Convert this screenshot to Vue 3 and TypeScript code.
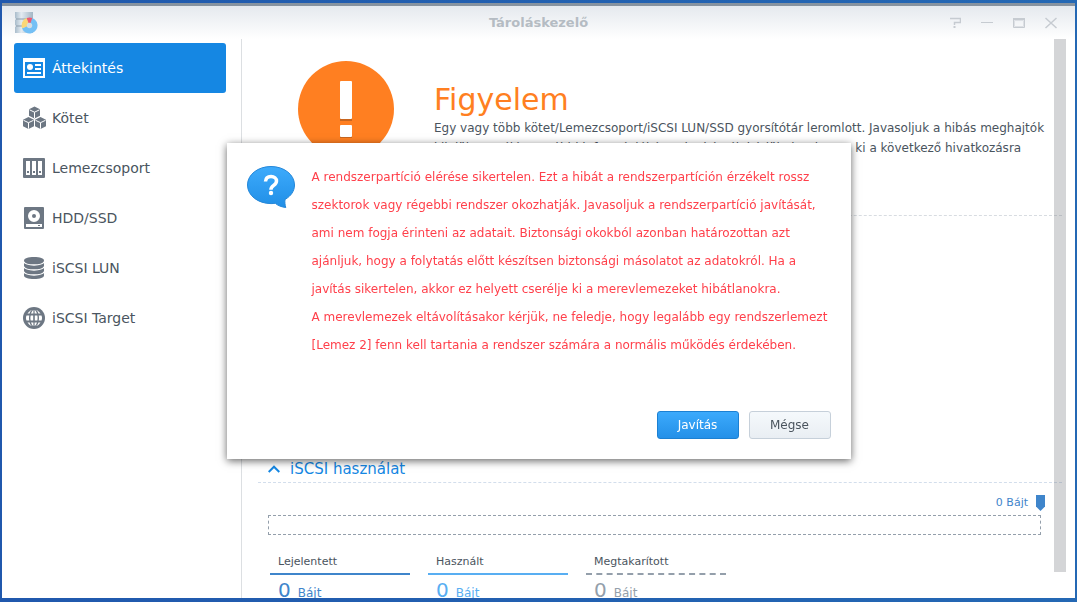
<script setup lang="ts">
import { ref } from 'vue'

interface NavItem { id: string; label: string }
interface Stat { id: string; label: string; value: number }

const active = ref('overview')
const dialogOpen = ref(true)
const usageOpen = ref(true)

const items: NavItem[] = [
  { id: 'overview', label: 'Áttekintés' },
  { id: 'volume', label: 'Kötet' },
  { id: 'group', label: 'Lemezcsoport' },
  { id: 'disk', label: 'HDD/SSD' },
  { id: 'lun', label: 'iSCSI LUN' },
  { id: 'target', label: 'iSCSI Target' },
]

const stats: Stat[] = [
  { id: 'reported', label: 'Lejelentett', value: 0 },
  { id: 'used', label: 'Használt', value: 0 },
  { id: 'saved', label: 'Megtakarított', value: 0 },
]
</script>

<template>
  <div class="desktop">
    <section class="window">
      <header class="titlebar">
        <svg class="app-icon" width="24" height="22" viewBox="0 0 24 22" aria-hidden="true">
          <defs>
            <linearGradient id="metal" x1="0" x2="1" y1="0" y2="0">
              <stop offset="0" stop-color="#a9bccb" />
              <stop offset=".35" stop-color="#e3ebf1" />
              <stop offset="1" stop-color="#a3b6c5" />
            </linearGradient>
          </defs>
          <path d="M1 0h18v6l-1 1 1 1v5l-1 1 1 1v6H1v-6l1-1-1-1V8l1-1-1-1z" fill="url(#metal)" />
          <path d="M2 7h16M2 14h16" stroke="#8d9eac" />
          <path d="M15.500 13.500V5.500A8 8 0 1 1 8 16.200z" fill="#74c0f5" />
          <path d="M15.500 13.500L8 16.200A8 8 0 0 1 12.700 6z" fill="#fbd777" />
          <path d="M15.500 13.500L12.700 6A8 8 0 0 1 18.300 6z" fill="#ee5a70" />
          <circle cx="15.500" cy="13.500" r="2.700" fill="#d3dde4" />
        </svg>
        <h1>Tároláskezelő</h1>
        <div class="controls">
          <button type="button" aria-label="Súgó">
            <svg width="12" height="12" viewBox="0 0 12 12"><path d="M1 1.500h10.500v4H5.500v2.500" fill="none" stroke="#c6cbd1" stroke-width="1.500" /><path d="M4.500 9h2v2h-2z" fill="#c6cbd1" /></svg>
          </button>
          <button type="button" aria-label="Kis méret">
            <svg width="12" height="12" viewBox="0 0 12 12"><path d="M0 5.500h12" stroke="#c6cbd1" /></svg>
          </button>
          <button type="button" aria-label="Teljes méret">
            <svg width="12" height="12" viewBox="0 0 12 12"><path d="M.5 1v9.500h11V1" fill="none" stroke="#c6cbd1" /><path d="M0 2h12" stroke="#c6cbd1" stroke-width="2" /><path d="M1.500 3.500v6h9v-6z" fill="none" stroke="#dde0e5" /></svg>
          </button>
          <button type="button" aria-label="Bezárás">
            <svg width="12" height="12" viewBox="0 0 12 12"><path d="M.5 1l11 10M11.500 1l-11 10" stroke="#c6cbd1" stroke-width="1.500" /></svg>
          </button>
        </div>
      </header>

      <div class="body">
        <nav class="sidebar">
          <button
            v-for="item in items"
            :key="item.id"
            type="button"
            class="nav-item"
            :class="{ active: item.id === active }"
            @click="active = item.id"
          >
            <svg class="nav-icon" width="24" height="24" viewBox="0 0 24 24" fill="currentColor" aria-hidden="true">
              <template v-if="item.id === 'overview'">
                <path fill-rule="evenodd" d="M1 2h22v20H1zM3 6v14h18V6z" />
                <circle cx="8" cy="11" r="3" />
                <path d="M13 8h6v2h-6zM13 12h6v2h-6zM5 16h14v2H5z" />
              </template>
              <template v-else-if="item.id === 'volume'">
                <path d="M12.500 .5L18 3.200v6.600l-5.500 2.600L7 9.800V3.200zM6.500 11L12 13.700v6.600L6.500 23 1 20.300v-6.600zM18.500 11l5.500 2.700v6.600L18.500 23 13 20.300v-6.600z" />
                <path d="M7.500 3.800l5 2.400 5-2.400M12.500 6.200v6M1.500 14.300l5 2.400 5-2.400M6.500 16.700v6M13.500 14.300l5 2.400 5-2.400M18.500 16.700v6" fill="none" stroke="#fff" stroke-width="1" />
              </template>
              <template v-else-if="item.id === 'group'">
                <path fill-rule="evenodd" d="M2 2h20a1 1 0 0 1 1 1v18a1 1 0 0 1-1 1H2a1 1 0 0 1-1-1V3a1 1 0 0 1 1-1zM4 5v14h4V5zM10 5v14h4V5zM16 5v14h4V5z" />
                <path d="M5 15h2v2H5zM11 15h2v2h-2zM17 15h2v2h-2z" />
              </template>
              <template v-else-if="item.id === 'disk'">
                <path fill-rule="evenodd" d="M3 1h18a1 1 0 0 1 1 1v20a1 1 0 0 1-1 1H3a1 1 0 0 1-1-1V2a1 1 0 0 1 1-1zM12 4a6 6 0 1 0 0 12 6 6 0 0 0 0-12zM4 18v3h16v-3z" />
                <circle cx="12" cy="10" r="2" />
                <path d="M16 19h2v1h-2z" />
              </template>
              <template v-else-if="item.id === 'lun'">
                <path d="M2 4.500C2 2.500 6 1 12 1s10 1.500 10 3.500v15c0 2-4 3.500-10 3.500S2 21.500 2 19.500z" />
                <path d="M1.500 5.500C3 8 7 9 12 9s9-1 10.500-3.500M1.500 10.500C3 13 7 14 12 14s9-1 10.500-3.500M1.500 15.500C3 18 7 19 12 19s9-1 10.500-3.500" fill="none" stroke="#fff" stroke-width="1.300" />
              </template>
              <template v-else>
                <circle cx="12" cy="12" r="11" />
                <path d="M10 4C8.500 5 8 6 7.600 7.500H5.500C6.500 6 8 4.500 10 4zM11.400 4v3.500H9C9.500 6 10.300 4.500 11.400 4zM12.600 4c1.100.5 1.900 2 2.400 3.500h-2.400zM14 4c2 .5 3.500 2 4.500 3.500h-2.100C16 6 15.500 5 14 4zM4.500 9.500h2.800c-.4 2-.4 3.500 0 5H4.500c-.7-2-.7-3 0-5zM8.700 9.500h2.500v5H8.700c-.4-2-.4-3 0-5zM12.800 9.500h2.500c.4 2 .4 3 0 5h-2.500zM16.700 9.500h2.800c.7 2 .7 3 0 5h-2.800c.4-2 .4-3 0-5zM5.500 16.500h2.100C8 18 8.500 19 10 20c-2-.5-3.500-2-4.500-3.500zM9 16.500h2.400V20c-1.100-.5-1.900-2-2.400-3.500zM12.600 16.500H15c-.5 1.500-1.300 3-2.400 3.500zM16.400 16.500h2.100c-1 1.500-2.500 3-4.500 3.500 1.500-1 2-2 2.400-3.500z" fill="#fff" />
              </template>
            </svg>
            <span>{{ item.label }}</span>
          </button>
        </nav>

        <main class="content">
          <section class="status">
            <svg class="status-icon" width="96" height="96" viewBox="0 0 96 96" role="img" aria-label="Figyelmeztetés">
              <circle cx="48" cy="48" r="48" fill="#ff7f21" />
              <path d="M42 21h12v39H42zM42 65h12v12H42z" fill="#c8661f" />
              <rect x="42" y="20" width="12" height="38" rx="1" fill="#fff" />
              <rect x="42" y="64" width="12" height="12" rx="1" fill="#fff" />
            </svg>
            <div class="status-text">
              <h2>Figyelem</h2>
              <p>
                Egy vagy több kötet/Lemezcsoport/iSCSI LUN/SSD gyorsítótár leromlott. Javasoljuk a hibás meghajtók<br>
                kijelölt cseréjét. További információkért a javításról, kérjük, kattintson ki a következő hivatkozásra
              </p>
            </div>
          </section>

          <section class="usage">
            <h3>
              <button type="button" class="toggle" :aria-expanded="usageOpen" @click="usageOpen = !usageOpen">
                <svg width="12" height="8" viewBox="0 0 12 8" aria-hidden="true"><path d="M.7 7L6 1.700 11.300 7" fill="none" stroke="currentColor" stroke-width="2" /></svg>
                iSCSI használat
              </button>
            </h3>
            <div v-if="usageOpen" class="usage-body">
              <div class="marker">
                <span>0 Bájt</span>
                <svg width="9" height="16" viewBox="0 0 9 16" aria-hidden="true"><path d="M0 0h9v11.500L4.500 16 0 11.500z" fill="#3f85cb" /></svg>
              </div>
              <div class="bar"></div>
              <dl class="stats">
                <div v-for="s in stats" :key="s.id" class="stat" :class="s.id">
                  <dt>{{ s.label }}</dt>
                  <dd><b>{{ s.value }}</b><span>Bájt</span></dd>
                </div>
              </dl>
            </div>
          </section>
          <div class="scrollbar"></div>
        </main>
      </div>
    </section>

    <div v-if="dialogOpen" class="overlay">
      <div class="dialog" role="alertdialog" aria-modal="true" aria-describedby="message">
        <div class="dialog-main">
          <svg class="bubble" width="48" height="42" viewBox="0 0 48 42" aria-hidden="true">
            <defs>
              <linearGradient id="blue" x1="0" x2="0" y1="0" y2="1">
                <stop offset="0" stop-color="#3dabfc" />
                <stop offset="1" stop-color="#208ee6" />
              </linearGradient>
            </defs>
            <path d="M24 .5C37 .5 47.500 8.500 47.500 19c0 6-3.500 11-9.500 14.500-.3 3 0 5.500.8 8-4.500-.5-8-2-10.500-4.200-1.500.2-3 .3-4.300.3C11 37.600.5 29.500.5 19S11 .5 24 .5z" fill="url(#blue)" stroke="#2587d8" />
            <path d="M18.500 15.500c.2-3.500 2.400-5 5.500-5 3.300 0 5.500 1.800 5.500 4.500 0 4.500-5.600 4.200-5.600 8.700" fill="none" stroke="#fff" stroke-width="3.500" />
            <circle cx="24" cy="27" r="2.200" fill="#fff" />
          </svg>
          <p id="message" class="message">
            A rendszerpartíció elérése sikertelen. Ezt a hibát a rendszerpartíción érzékelt rossz<br>
            szektorok vagy régebbi rendszer okozhatják. Javasoljuk a rendszerpartíció javítását,<br>
            ami nem fogja érinteni az adatait. Biztonsági okokból azonban határozottan azt<br>
            ajánljuk, hogy a folytatás előtt készítsen biztonsági másolatot az adatokról. Ha a<br>
            javítás sikertelen, akkor ez helyett cserélje ki a merevlemezeket hibátlanokra.<br>
            A merevlemezek eltávolításakor kérjük, ne feledje, hogy legalább egy rendszerlemezt<br>
            [Lemez 2] fenn kell tartania a rendszer számára a normális működés érdekében.
          </p>
        </div>
        <div class="actions">
          <button type="button" class="btn primary" @click="dialogOpen = false">Javítás</button>
          <button type="button" class="btn" @click="dialogOpen = false">Mégse</button>
        </div>
      </div>
    </div>
  </div>
</template>

<style>
html, body { margin: 0; }
</style>

<style scoped>
.desktop {
  box-sizing: border-box;
  height: 100vh;
  padding: 3px 2px 4px;
  background: linear-gradient(90deg, #2058ad, #2468b4);
  font-family: Verdana, "DejaVu Sans", sans-serif;
  font-size: 12px;
  color: #4a545e;
}
button { font-family: inherit; margin: 0; cursor: pointer; }
.window {
  display: flex;
  flex-direction: column;
  box-sizing: border-box;
  height: 100%;
  border-top: 3px solid #8793a0;
  background: #fff;
  overflow: hidden;
}
.titlebar {
  display: grid;
  grid-template-columns: 1fr auto 1fr;
  align-items: center;
  flex: none;
  height: 33px;
  padding: 0 18px 0 12px;
  background: linear-gradient(#e5e9ee, #fff);
}
.titlebar h1 { margin: 0; padding-left: 6px; font-size: 13px; line-height: 16px; color: #b5bcc3; }
.controls { display: flex; justify-content: flex-end; gap: 20px; }
.controls button { display: flex; padding: 0; border: 0; background: none; }
.body { display: flex; flex: 1; min-height: 0; }
.sidebar {
  flex: none;
  box-sizing: border-box;
  width: 240px;
  padding: 4px 15px 0 12px;
  border-right: 1px solid #dcdfe2;
}
.nav-item {
  display: flex;
  align-items: center;
  gap: 6px;
  width: 100%;
  height: 50px;
  padding: 0 8px;
  border: 0;
  border-radius: 3px;
  background: none;
  font-size: 14px;
  color: #4a5560;
  text-align: left;
}
.nav-icon { color: #6d7783; }
.nav-item.active { background: #1587e3; color: #fff; }
.nav-item.active .nav-icon { color: #fff; }
.content {
  position: relative;
  flex: 1;
  min-width: 0;
  padding: 22px 13px 0 16px;
  overflow: hidden;
}
.status {
  display: flex;
  gap: 40px;
  height: 154px;
  padding-left: 40px;
  border-bottom: 1px dashed #d8dce1;
}
.status-icon { flex: none; }
.status-text { padding-top: 21px; white-space: nowrap; }
.status h2 { margin: 0; font-size: 30px; line-height: 36px; font-weight: 400; color: #ff7f21; }
.status p { margin: 0; line-height: 20px; }
.usage { margin-top: 238px; }
.usage h3 { margin: 0; border-bottom: 1px dashed #d3deec; font-weight: 400; }
.toggle {
  display: flex;
  align-items: center;
  gap: 10px;
  height: 28px;
  padding: 1px 10px 0;
  border: 0;
  background: none;
  font-size: 15px;
  color: #1587e3;
}
.usage-body { padding: 12px 17px 0 10px; }
.marker {
  display: flex;
  justify-content: flex-end;
  gap: 8px;
  height: 20px;
  font-size: 11px;
  line-height: 16px;
  color: #3f85cb;
}
.bar { height: 18px; margin-right: 4px; border: 1px dashed #949fab; }
.stats { display: flex; gap: 18px; margin: 16px 0 0 2px; }
.stat { width: 140px; }
.stat dt { padding: 2px 8px; border-bottom: 2px solid #3f85cb; font-size: 11px; line-height: 18px; }
.stat dd {
  display: flex;
  align-items: baseline;
  gap: 7px;
  margin: 0;
  padding: 0 8px;
  line-height: 30px;
  color: #3f85cb;
}
.stat b { font-size: 20px; font-weight: 400; }
.used dt { border-color: #58aef2; }
.used dd { color: #58aef2; }
.saved dt { border-bottom-style: dashed; border-color: #949fab; }
.saved dd { color: #949fab; }
.scrollbar {
  position: absolute;
  top: 0;
  right: 9px;
  bottom: 26px;
  width: 12px;
  background: rgba(120, 125, 132, .32);
}
.overlay { position: fixed; inset: 0; display: grid; place-items: center; }
.dialog {
  box-sizing: border-box;
  width: 624px;
  max-width: 100%;
  padding: 20px;
  background: #fff;
  box-shadow: 0 2px 8px rgba(0, 0, 0, .6);
}
.dialog-main { display: flex; gap: 17px; }
.bubble { flex: none; margin-top: 3px; }
.message { margin: 0; line-height: 28px; color: #ff404b; white-space: nowrap; }
.actions { display: flex; justify-content: flex-end; gap: 10px; margin-top: 52px; }
.btn {
  width: 82px;
  height: 28px;
  padding: 0;
  border: 1px solid #c6d0da;
  border-radius: 3px;
  background: linear-gradient(#f5f9fc, #e9eef3);
  font-size: 12px;
  color: #4a545e;
}
.btn.primary { border-color: #1c80d2; background: linear-gradient(#3caafc, #2490e8); color: #fff; }
</style>
